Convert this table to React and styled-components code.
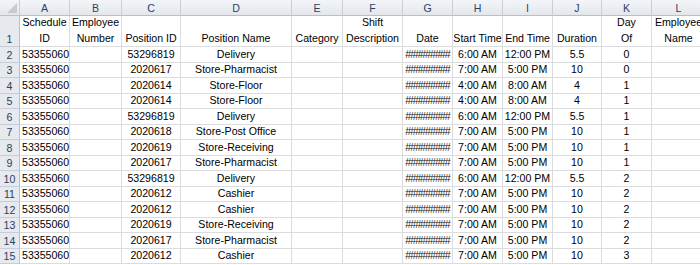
import React from 'react';
import styled, { createGlobalStyle } from 'styled-components';

const GlobalStyle = createGlobalStyle`
  html, body {
    margin: 0;
    padding: 0;
    overflow: hidden;
    background: #ffffff;
  }
`;

const columns = [
  { key: 'A', width: 50, align: 'left' },
  { key: 'B', width: 52, align: 'center' },
  { key: 'C', width: 59, align: 'center' },
  { key: 'D', width: 111, align: 'center' },
  { key: 'E', width: 51, align: 'center' },
  { key: 'F', width: 60, align: 'center' },
  { key: 'G', width: 50, align: 'center' },
  { key: 'H', width: 50, align: 'center' },
  { key: 'I', width: 50, align: 'center' },
  { key: 'J', width: 49, align: 'center' },
  { key: 'K', width: 50, align: 'center' },
  { key: 'L', width: 54, align: 'center' },
];

// header titles, one entry per wrapped line
const titles = [
  ['Schedule', 'ID'],
  ['Employee', 'Number'],
  ['Position ID'],
  ['Position Name'],
  ['Category'],
  ['Shift', 'Description'],
  ['Date'],
  ['Start Time'],
  ['End Time'],
  ['Duration'],
  ['Day', 'Of'],
  ['Employee', 'Name'],
];

const HASH = '#########';

const rows = [
  ['53296819', 'Delivery', '6:00 AM', '12:00 PM', '5.5', '0'],
  ['2020617', 'Store-Pharmacist', '7:00 AM', '5:00 PM', '10', '0'],
  ['2020614', 'Store-Floor', '4:00 AM', '8:00 AM', '4', '1'],
  ['2020614', 'Store-Floor', '4:00 AM', '8:00 AM', '4', '1'],
  ['53296819', 'Delivery', '6:00 AM', '12:00 PM', '5.5', '1'],
  ['2020618', 'Store-Post Office', '7:00 AM', '5:00 PM', '10', '1'],
  ['2020619', 'Store-Receiving', '7:00 AM', '5:00 PM', '10', '1'],
  ['2020617', 'Store-Pharmacist', '7:00 AM', '5:00 PM', '10', '1'],
  ['53296819', 'Delivery', '6:00 AM', '12:00 PM', '5.5', '2'],
  ['2020612', 'Cashier', '7:00 AM', '5:00 PM', '10', '2'],
  ['2020612', 'Cashier', '7:00 AM', '5:00 PM', '10', '2'],
  ['2020619', 'Store-Receiving', '7:00 AM', '5:00 PM', '10', '2'],
  ['2020617', 'Store-Pharmacist', '7:00 AM', '5:00 PM', '10', '2'],
  ['2020612', 'Cashier', '7:00 AM', '5:00 PM', '10', '3'],
].map(([posId, posName, start, end, dur, day]) => [
  '53355060', '', posId, posName, '', '', HASH, start, end, dur, day, '',
]);

const Sheet = styled.div`
  display: grid;
  grid-template-columns: 20px ${columns.map((c) => `${c.width}px`).join(' ')};
  grid-template-rows: 16px 31px repeat(14, 15.5px);
  width: max-content;
  font-family: 'Liberation Sans', Arial, sans-serif;
  font-size: 10.6px;
  color: #000;
`;

const HeaderBase = styled.div`
  box-sizing: border-box;
  background: linear-gradient(#f3f5f8, #e3e7ec);
  border-right: 1px solid #c9ced6;
  border-bottom: 1px solid #b9c0c9;
  color: #2c4161;
  display: flex;
  align-items: center;
  justify-content: center;
`;

const Corner = styled(HeaderBase)`
  position: relative;
  &::after {
    content: '';
    position: absolute;
    right: 2px;
    bottom: 2px;
    width: 0;
    height: 0;
    border-left: 10px solid transparent;
    border-bottom: 10px solid #c7cbd1;
  }
`;

const ColHeader = styled(HeaderBase)`
  padding-top: 1px;
`;

const RowHeader = styled(HeaderBase)`
  background: #e6e9ee;
  border-bottom: 1px solid #c9ced6;
  border-right: 1px solid #b9c0c9;
  align-items: flex-end;
  padding-bottom: 1px;
`;

const Cell = styled.div`
  box-sizing: border-box;
  border-right: 1px solid #dadcdd;
  border-bottom: 1px solid #dadcdd;
  display: flex;
  align-items: flex-end;
  justify-content: ${(p) => (p.$align === 'left' ? 'flex-start' : 'center')};
  padding: 0 2px 1px;
  white-space: nowrap;
  line-height: 14px;
`;

const TitleCell = styled(Cell)`
  flex-direction: column;
  align-items: center;
  justify-content: flex-end;
  line-height: 15.5px;
  padding-bottom: 0;
`;

const TitleLine = styled.span`
  display: block;
  white-space: nowrap;
`;

const Hashes = styled.span`
  letter-spacing: -0.95px;
  color: #222;
`;

export default function App() {
  return (
    <>
      <GlobalStyle />
      <Sheet>
        <Corner />
        {columns.map((c) => (
          <ColHeader key={c.key}>{c.key}</ColHeader>
        ))}

        <RowHeader>1</RowHeader>
        {titles.map((lines, i) => (
          <TitleCell key={i}>
            {lines.map((line) => (
              <TitleLine key={line}>{line}</TitleLine>
            ))}
          </TitleCell>
        ))}

        {rows.map((row, r) => (
          <React.Fragment key={r}>
            <RowHeader>{r + 2}</RowHeader>
            {row.map((value, i) => (
              <Cell key={i} $align={columns[i].align}>
                {value === HASH ? <Hashes>{value}</Hashes> : value}
              </Cell>
            ))}
          </React.Fragment>
        ))}
      </Sheet>
    </>
  );
}
